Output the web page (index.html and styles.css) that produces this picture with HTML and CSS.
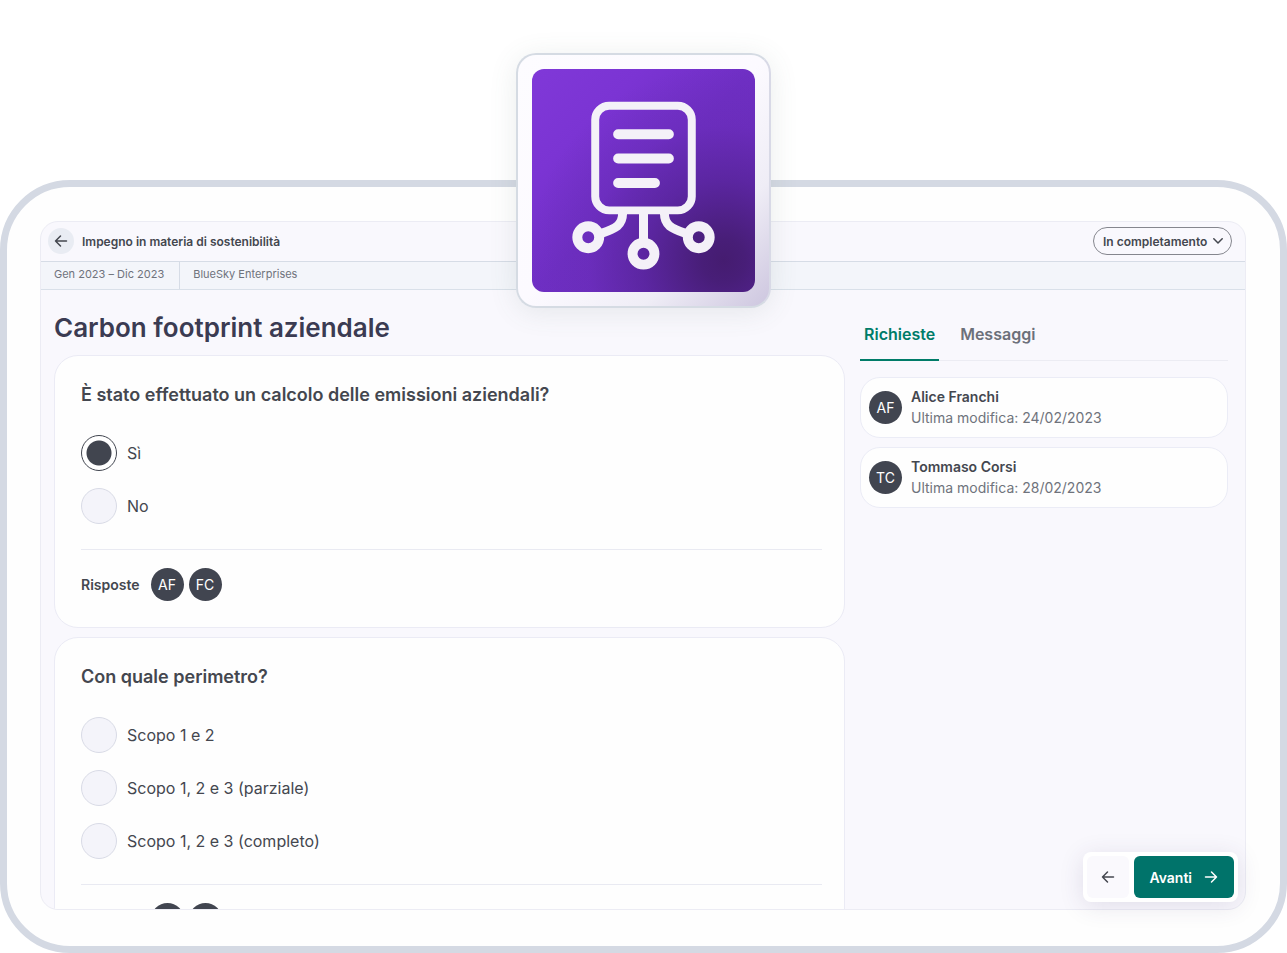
FILE: index.html
```html
<!DOCTYPE html>
<html lang="it">
<head>
<meta charset="utf-8">
<meta name="viewport" content="width=device-width, initial-scale=1">
<title>Carbon footprint aziendale</title>
<link rel="stylesheet" href="styles.css">
</head>
<body>
<div class="stage">
  <div class="device">
    <div class="screen">
      <div class="panel">
        <header class="topbar">
          <button class="back" type="button" aria-label="Indietro">
            <svg width="14" height="14" viewBox="0 0 14 14"><path d="M12.500 7H1.500M6.500 2 1.500 7 6.500 12"/></svg>
          </button>
          <span class="topbar-title">Impegno in materia di sostenibilità</span>
          <div class="status">
            <select class="status-select" aria-label="Stato">
              <option>In completamento</option>
            </select>
            <svg class="status-chevron" width="10" height="6" viewBox="0 0 10 6"><path d="M.8.8 5 5 9.200.8"/></svg>
          </div>
        </header>
        <div class="subbar">
          <span class="subbar-item">Gen 2023 – Dic 2023</span>
          <span class="subbar-item">BlueSky Enterprises</span>
        </div>
        <div class="content">
          <main class="questions">
            <h1 class="title">Carbon footprint aziendale</h1>
            <section class="card">
              <h2 class="question">È stato effettuato un calcolo delle emissioni aziendali?</h2>
              <div class="options">
                <label class="option"><input class="radio" type="radio" name="calcolo" checked>Sì</label>
                <label class="option"><input class="radio" type="radio" name="calcolo">No</label>
              </div>
              <div class="answers">
                <span class="answers-label">Risposte</span>
                <span class="avatar">AF</span>
                <span class="avatar">FC</span>
              </div>
            </section>
            <section class="card">
              <h2 class="question">Con quale perimetro?</h2>
              <div class="options">
                <label class="option"><input class="radio" type="radio" name="perimetro">Scopo 1 e 2</label>
                <label class="option"><input class="radio" type="radio" name="perimetro">Scopo 1, 2 e 3 (parziale)</label>
                <label class="option"><input class="radio" type="radio" name="perimetro">Scopo 1, 2 e 3 (completo)</label>
              </div>
              <div class="answers">
                <span class="answers-label">Risposte</span>
                <span class="avatar">AF</span>
                <span class="avatar">FC</span>
              </div>
            </section>
          </main>
          <aside class="side">
            <div class="tabs" role="tablist">
              <button class="tab tab-active" type="button" role="tab" aria-selected="true">Richieste</button>
              <button class="tab" type="button" role="tab" aria-selected="false">Messaggi</button>
            </div>
            <article class="request">
              <span class="avatar">AF</span>
              <div class="request-text">
                <div class="request-name">Alice Franchi</div>
                <div class="request-date">Ultima modifica: 24/02/2023</div>
              </div>
            </article>
            <article class="request">
              <span class="avatar">TC</span>
              <div class="request-text">
                <div class="request-name">Tommaso Corsi</div>
                <div class="request-date">Ultima modifica: 28/02/2023</div>
              </div>
            </article>
          </aside>
        </div>
      </div>
      <nav class="pager">
        <button class="prev" type="button" aria-label="Precedente">
          <svg width="14" height="14" viewBox="0 0 14 14"><path d="M12.500 7H1.500M6.500 2 1.500 7 6.500 12"/></svg>
        </button>
        <button class="next" type="button">Avanti
          <svg width="14" height="14" viewBox="0 0 14 14"><path d="M1.500 7h11M7.500 2 12.500 7 7.500 12"/></svg>
        </button>
      </nav>
    </div>
  </div>
  <div class="badge">
    <svg class="badge-art" viewBox="0 0 224 224" aria-hidden="true">
      <g fill="none" stroke="#f4f1f8">
        <rect x="63.500" y="37" width="97" height="105" rx="14" stroke-width="8"/>
        <path d="M86.500 65.500h51M86.500 90h51M86.500 114.500h37" stroke-width="10" stroke-linecap="round"/>
        <path d="M91 145C91 157 84 160 70 165M133 145C133 157 140 160 154 165M112 144v28" stroke-width="9" stroke-linecap="butt"/>
        <circle cx="56.500" cy="169" r="11" stroke-width="10"/>
        <circle cx="112" cy="185.500" r="11" stroke-width="10"/>
        <circle cx="167.500" cy="169" r="11" stroke-width="10"/>
      </g>
    </svg>
  </div>
</div>
</body>
</html>
```
FILE: styles.css
```css
* {
  box-sizing: border-box;
}

body {
  margin: 0;
  background: #fff;
  color: #44474f;
  font-family: Inter, "Liberation Sans", sans-serif;
}

button,
select {
  font: inherit;
  color: inherit;
  margin: 0;
  cursor: pointer;
}

svg {
  fill: none;
  stroke: currentColor;
  stroke-width: 1.5;
  stroke-linecap: round;
  stroke-linejoin: round;
}

.stage {
  position: relative;
  display: flex;
  height: 100vh;
  min-height: 600px;
  padding-top: 180px;
}

.device {
  flex: 1;
  display: flex;
  min-width: 0;
  padding: 34px 34px 36px 33px;
  border: 7px solid #d4d9e3;
  border-radius: 70px;
  background: #fefefe;
}

.screen {
  position: relative;
  flex: 1;
  display: flex;
  min-width: 0;
}

.panel {
  flex: 1;
  display: flex;
  flex-direction: column;
  min-width: 0;
  overflow: hidden;
  border: 1px solid #ececf4;
  border-radius: 18px;
  background: #f9f8fd;
}

.topbar {
  display: flex;
  align-items: center;
  flex: none;
  height: 40px;
  padding: 0 13px 1px 7px;
  border-bottom: 1px solid #d6dce6;
  font-size: 12px;
  font-weight: 600;
}

.back {
  display: flex;
  align-items: center;
  justify-content: center;
  width: 26px;
  height: 26px;
  margin-right: 8px;
  padding: 0;
  border: 0;
  border-radius: 50%;
  background: #e9ecf3;
}

.status {
  position: relative;
  margin-left: auto;
}

.status-select {
  display: block;
  height: 28px;
  padding: 0 23px 0 9px;
  border: 1px solid #85868e;
  border-radius: 14px;
  background: transparent;
  appearance: none;
}

.status-chevron {
  position: absolute;
  top: 11px;
  right: 9px;
  pointer-events: none;
}

.subbar {
  display: flex;
  flex: none;
  height: 28px;
  border-bottom: 1px solid #d9e0e9;
  background: #f3f5fa;
  color: #6f737c;
  font-size: 11px;
  line-height: 24px;
}

.subbar-item {
  padding: 0 15px 0 13px;
}

.subbar-item + .subbar-item {
  border-left: 1px solid #d6dce6;
}

.content {
  display: grid;
  grid-template-columns: minmax(0, 1fr) 368px;
  gap: 15px;
  flex: 1;
  min-height: 0;
  padding: 0 17px 0 13px;
}

.title {
  margin: 0;
  padding: 22px 0 11px;
  color: #3b3b52;
  font-size: 26px;
  font-weight: 600;
  line-height: 32px;
}

.card {
  margin-bottom: 9px;
  padding: 27px 22px 26px 26px;
  border: 1px solid #ebebf5;
  border-radius: 24px;
  background: #fefefe;
}

.question {
  margin: 0 0 28px;
  font-size: 18px;
  font-weight: 600;
  line-height: 24px;
}

.options {
  display: grid;
  justify-items: start;
  gap: 17px;
  padding-bottom: 25px;
  border-bottom: 1px solid #e9eaf2;
}

.option {
  display: flex;
  align-items: center;
  gap: 10px;
  font-size: 16px;
}

.radio {
  width: 36px;
  height: 36px;
  margin: 0;
  border: 1px solid #d9dbe6;
  border-radius: 50%;
  background: #f4f4fa;
  appearance: none;
}

.radio:checked {
  border-color: #41454f;
  background: radial-gradient(circle, #41454f 12px, #fff 13px);
}

.answers {
  display: flex;
  align-items: center;
  gap: 5px;
  padding-top: 18px;
}

.answers-label {
  margin-right: 6px;
  font-size: 14px;
  font-weight: 600;
}

.avatar {
  display: flex;
  align-items: center;
  justify-content: center;
  flex: none;
  width: 33px;
  height: 33px;
  border-radius: 50%;
  background: #414550;
  color: #fff;
  font-size: 14px;
}

.tabs {
  display: flex;
  gap: 17px;
  height: 71px;
  margin-bottom: 16px;
  padding-top: 19px;
  box-shadow: inset 0 -1px #ececf3;
}

.tab {
  padding: 0 4px;
  border: 0;
  border-bottom: 2px solid transparent;
  background: none;
  color: #6c707a;
  font-size: 16px;
  font-weight: 600;
}

.tab-active {
  border-color: #007c68;
  color: #007c68;
}

.request {
  display: flex;
  align-items: center;
  gap: 9px;
  margin-bottom: 9px;
  padding: 8px 8px 9px;
  border: 1px solid #ebecf6;
  border-radius: 20px;
  background: #fefefe;
  font-size: 14px;
  line-height: 21px;
}

.request-name {
  font-weight: 600;
}

.request-date {
  color: #6f737c;
}

.pager {
  position: absolute;
  right: 8px;
  bottom: 8px;
  display: flex;
  padding: 4px;
  border-radius: 8px;
  background: #fff;
  box-shadow: 0 4px 24px rgba(60, 50, 100, 0.13);
}

.prev,
.next {
  display: flex;
  align-items: center;
  justify-content: center;
  height: 42px;
  border: 0;
  border-radius: 6px;
}

.prev {
  width: 42px;
  margin-right: 5px;
  padding: 0;
  background: #faf9fd;
}

.next {
  gap: 12px;
  padding: 0 16px 0 15px;
  background: #00736a;
  color: #fff;
  font-size: 14px;
  font-weight: 600;
}

.badge {
  position: absolute;
  top: 53px;
  left: 50%;
  width: 255px;
  margin-left: -128px;
  padding: 14px;
  border: 2px solid #d5dbe3;
  border-right-color: #d8d9e6;
  border-radius: 20px;
  background: linear-gradient(135deg, #fdfcff 0%, #fcfaff 50%, #efedf6 75%, #cdc6df 100%);
  box-shadow: 0 4px 28px rgba(80, 110, 100, 0.12);
}

.badge-art {
  display: block;
  width: 100%;
  border-radius: 12px;
  background:
    radial-gradient(circle at 86% 86%, #451c70 0%, #481e78 8%, rgba(82, 34, 145, 0.65) 30%, rgba(98, 41, 172, 0.3) 50%, rgba(112, 46, 196, 0) 72%),
    linear-gradient(135deg, #8038d8 0%, #7b34d3 25%, #6f2fc4 50%, #6b2cbb 100%);
}
```
